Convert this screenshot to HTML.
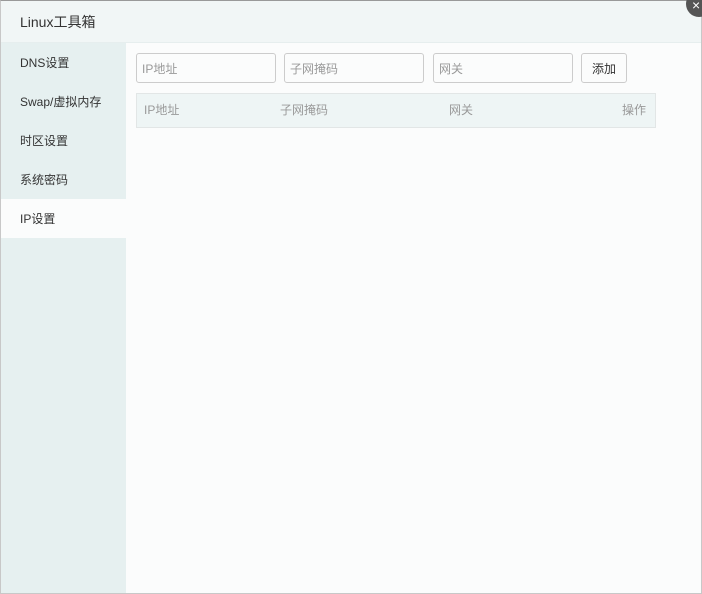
<!DOCTYPE html>
<html><head><meta charset="utf-8"><style>
*{margin:0;padding:0;box-sizing:border-box}
body{width:702px;height:594px;overflow:hidden;background:#fbfcfc;font-family:"Liberation Sans","Noto Sans CJK SC",sans-serif;font-size:12px;color:#333;position:relative}
.frame{position:absolute;left:0;top:0;width:702px;height:594px;border:1px solid #c8c8c8;border-top-color:#999}
.hd{position:absolute;left:1px;top:1px;right:1px;height:42px;background:#f1f6f6;border-bottom:1px solid #e6eeee;font-size:14px;line-height:42px;padding-left:19px;color:#333}
.side{position:absolute;left:1px;top:43px;width:125px;bottom:1px;background:#e6f0f0}
.side div{height:39px;line-height:41px;padding-left:19px;font-size:12px;color:#333}
.side .on{background:#fbfcfc}
.in{position:absolute;top:53px;height:30px;width:140px;border:1px solid #ccc;border-radius:3px;background:#fbfcfc;color:#999;line-height:30px;padding-left:5px}
.btn{position:absolute;left:581px;top:53px;width:46px;height:30px;border:1px solid #ccc;border-radius:3px;line-height:30px;text-align:center;color:#333;background:#fbfcfc}
.th{position:absolute;left:136px;top:93px;width:520px;height:35px;border:1px solid #e2e6e6;background:#eef5f5;color:#999;line-height:33px}
.th span{position:absolute}
.x{position:absolute;left:686px;top:-9px;width:26px;height:26px;border-radius:50%;background:#555;color:#fff;font-size:14px;line-height:28px;padding-left:6px}
</style></head><body>
<div class="frame"></div>
<div class="hd">Linux工具箱</div>
<div class="side">
<div>DNS设置</div><div>Swap/虚拟内存</div><div>时区设置</div><div>系统密码</div><div class="on">IP设置</div>
</div>
<div class="in" style="left:136px">IP地址</div>
<div class="in" style="left:284px">子网掩码</div>
<div class="in" style="left:433px">网关</div>
<div class="btn">添加</div>
<div class="th"><span style="left:7px">IP地址</span><span style="left:143px">子网掩码</span><span style="left:312px">网关</span><span style="left:485px">操作</span></div>
<div class="x">×</div>
</body></html>
